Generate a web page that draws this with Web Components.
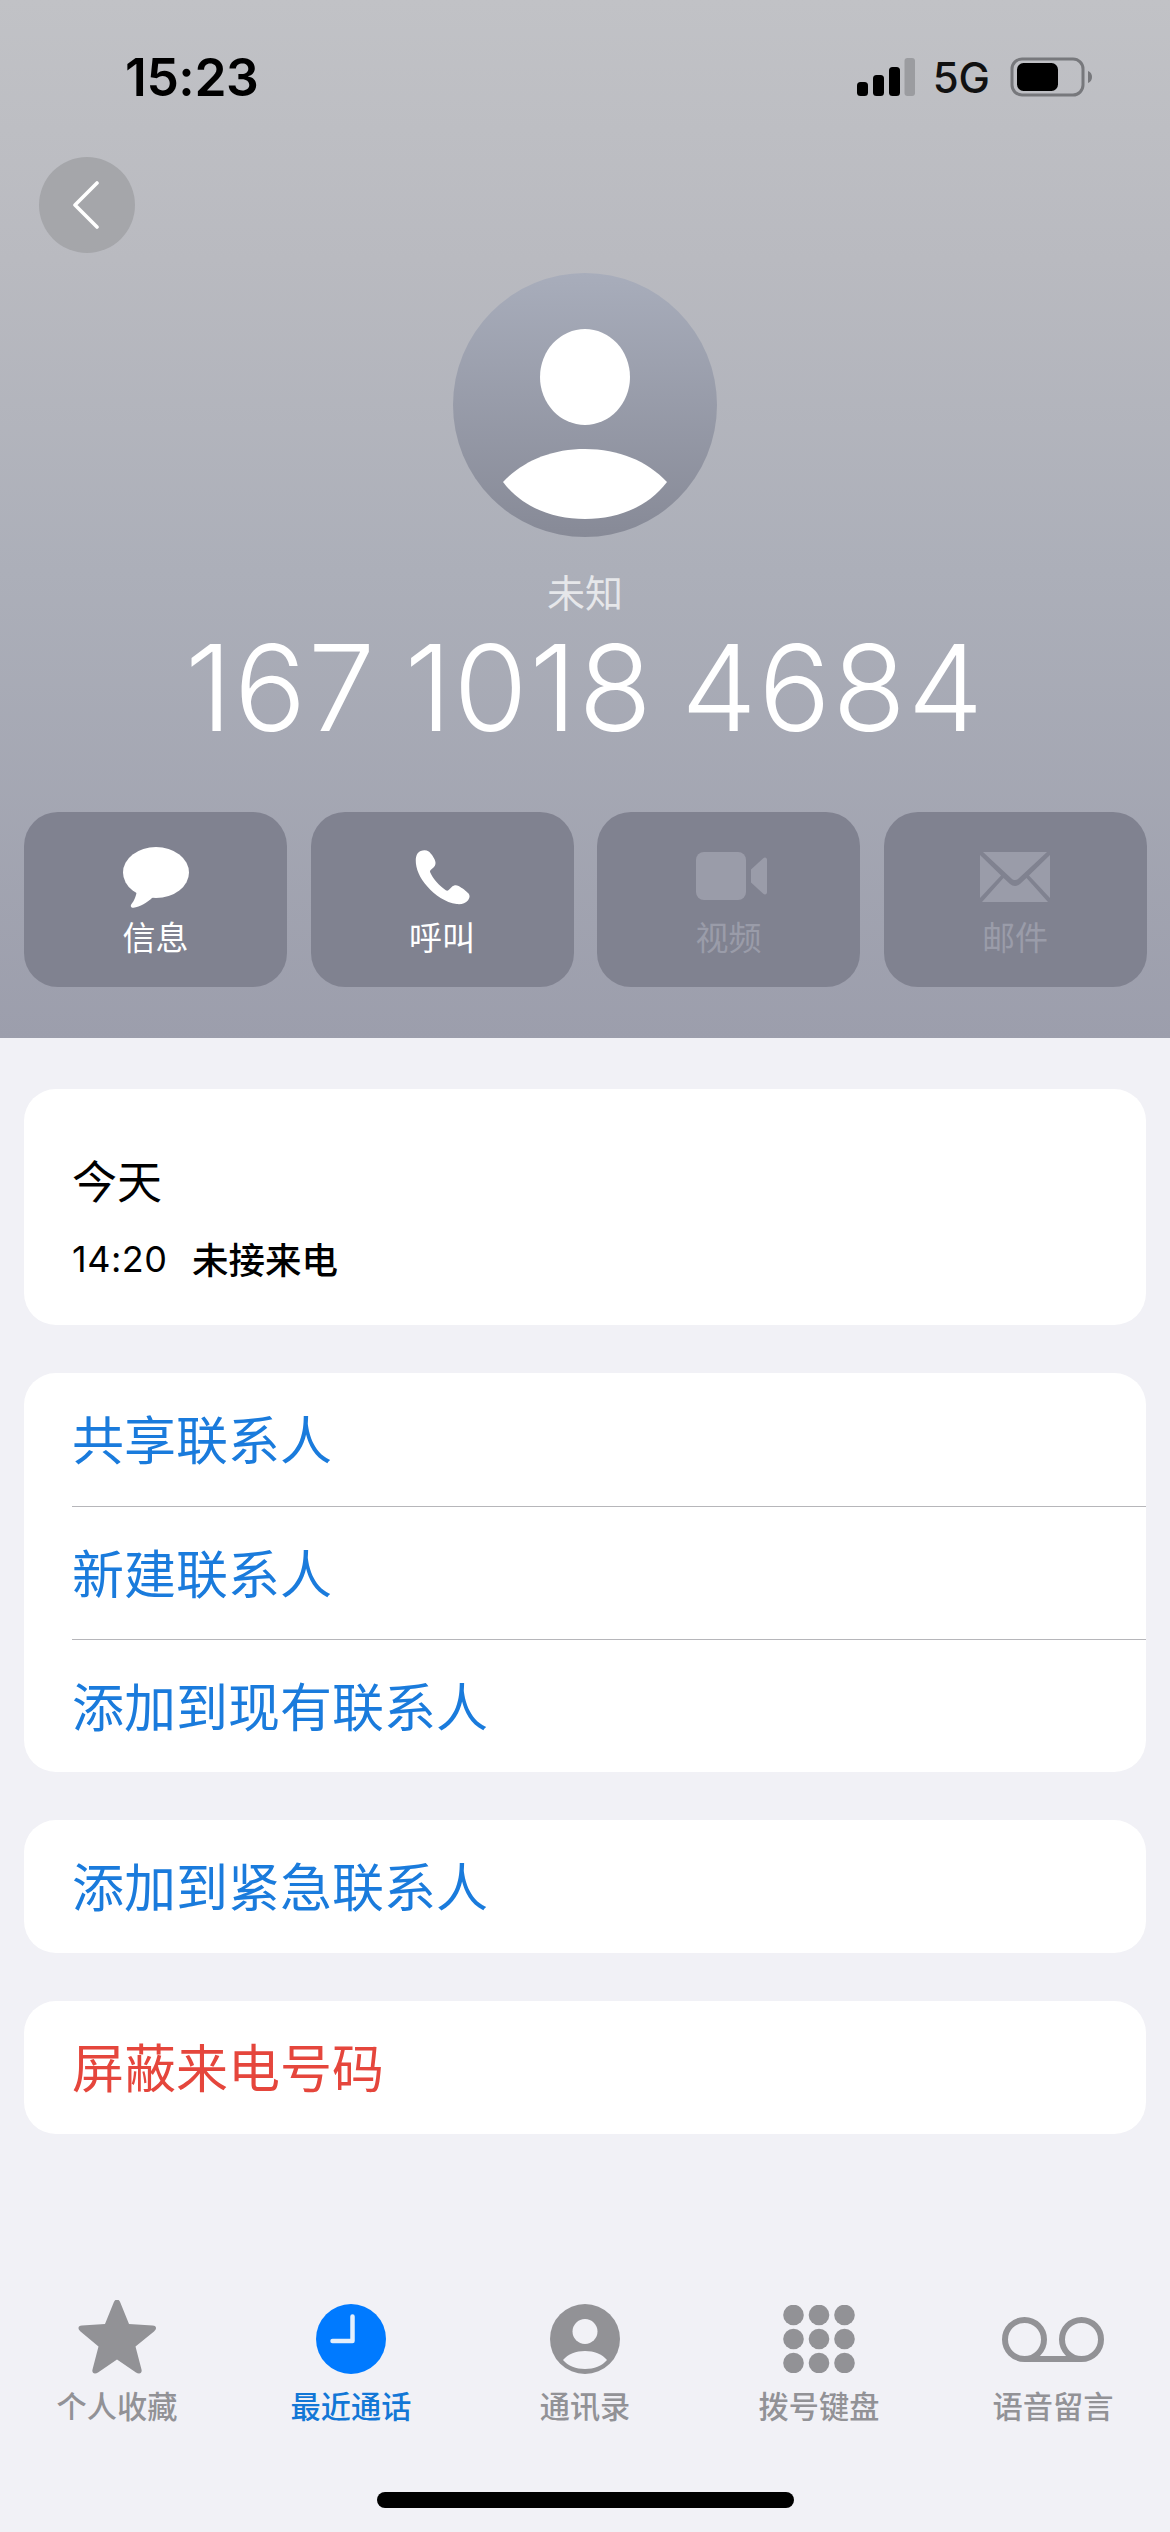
<!DOCTYPE html>
<html><head><meta charset="utf-8">
<style>
html,body{margin:0;padding:0;background:#f1f1f6}
body{width:1170px;height:2532px;overflow:hidden;position:relative;font-family:"Inter","Liberation Sans","Noto Sans CJK SC",sans-serif;display:flex;flex-direction:column}
</style></head><body>
<contact-header>
  <status-bar></status-bar>
  <back-button></back-button>
  <contact-avatar></contact-avatar>
  <span slot="name">未知</span>
  <span slot="number">167 1018 4684</span>
  <action-button slot="actions" label="信息" icon="msg"></action-button>
  <action-button slot="actions" label="呼叫" icon="phone"></action-button>
  <action-button slot="actions" label="视频" icon="video" disabled></action-button>
  <action-button slot="actions" label="邮件" icon="mail" disabled></action-button>
</contact-header>
<info-list>
  <history-card></history-card>
  <list-card><list-row>共享联系人</list-row><list-row>新建联系人</list-row><list-row>添加到现有联系人</list-row></list-card>
  <list-card><list-row>添加到紧急联系人</list-row></list-card>
  <list-card><list-row danger>屏蔽来电号码</list-row></list-card>
</info-list>
<tab-bar>
  <tab-item label="个人收藏" icon="star"></tab-item>
  <tab-item label="最近通话" icon="clock" active></tab-item>
  <tab-item label="通讯录" icon="person"></tab-item>
  <tab-item label="拨号键盘" icon="keypad"></tab-item>
  <tab-item label="语音留言" icon="voicemail"></tab-item>
</tab-bar>
<home-bar></home-bar>
<script>
const CJK='"Noto Sans CJK SC","Noto Sans",sans-serif';
function def(name,css,html){
  customElements.define(name,class extends HTMLElement{
    connectedCallback(){
      if(this.shadowRoot)return;
      const s=this.attachShadow({mode:'open'});
      s.innerHTML='<style>'+css+'</style>'+(typeof html==='function'?html(this):html);
    }
  });
}
const ICONS={
 msg:'<svg width="66" height="61" viewBox="0 0 66 61"><ellipse cx="33" cy="25.500" rx="33" ry="25.500" fill="currentColor"/><path d="M14 42C13.500 49 11 54 8.500 57c-1.500 2 -.5 4 2 3.800C17 60 24 56 30 50Z" fill="currentColor"/></svg>',
 phone:'<svg width="55" height="56" viewBox="0 0 58 58"><path d="M6 1.500C3 2.500 1 6 .8 11 .6 20 5 30 13 39c8 9 19 17 31 18.500 5 .5 9-.5 12-4 2-2.500 2-5 .5-7-2-2.500-7-6-10.500-8-2.500-1.300-5-1-7 .8l-3.500 3.500c-1 1-2 1-3 .3-3-2-7-5.500-10-9-3-3.500-5.500-7.500-6.500-10-.4-1 0-2 .8-2.700l3-2.800c2-2 2.300-4.300 1.300-7C20.500 9 17 4 14.500 2 12 .5 9 .5 6 1.500Z" fill="currentColor"/></svg>',
 video:'<svg style="margin:0 0 2px 6px" width="71" height="48" viewBox="0 0 71 48"><rect x="0" y="0" width="50" height="48" rx="8" fill="currentColor"/><path d="M55 17.500 67 6.500c2-1.700 4-.8 4 1.500v32c0 2.300-2 3.200-4 1.500L55 30.500Z" fill="currentColor"/></svg>',
 mail:'<svg width="70" height="50" viewBox="0 0 70 50"><g fill="currentColor"><path d="M3 0H67L38.500 26.500C36.500 28.500 33.500 28.500 31.500 26.500Z"/><path d="M0 3 21 23.500 0 46Z"/><path d="M70 3 49 23.500 70 46Z"/><path d="M23.500 26 30 32c3 2.500 7 2.500 10 0l6.500-6L68 50H2Z"/></g></svg>'
};
const TAB={
 star:'<svg width="78" height="78" viewBox="0 3 78 78"><path d="M39 2.500c1.500 0 2.500 1 3.300 3l8.700 21.500 23.500 1.500c2.500.2 3.500 1.200 3.500 2.500 0 1.200-.7 2.300-2 3.400L57.500 49.500l6 23c.6 2.300-.4 4-2.500 4-1 0-2-.4-3-1L39 62.500l-19 13c-1 .6-2 1-3 1-2.100 0-3.100-1.700-2.500-4l6-23L2.500 34.400C1.200 33.300.5 32.200.5 31c0-1.300 1-2.300 3.500-2.500L27 27l8.700-21.500c.8-2 1.800-3 3.300-3Z" fill="currentColor"/></svg>',
 clock:'<svg width="70" height="70" viewBox="0 0 70 70"><circle cx="35" cy="35" r="35" fill="#007aff"/><path d="M36.500 12.500V37H16.500" fill="none" stroke="#e3effc" stroke-width="4.500" stroke-linejoin="round" stroke-linecap="round"/></svg>',
 person:'<svg width="70" height="70" viewBox="0 0 70 70"><circle cx="35" cy="35" r="35" fill="currentColor"/><circle cx="35" cy="27.500" r="12.500" fill="#f1f1f6"/><path d="M13 56C18 50 26 47 35 47s17 3 22 9C52 62 44 65 35 65S18 62 13 56Z" fill="#f1f1f6"/></svg>',
 keypad:'<svg width="72" height="68" viewBox="0 0 72 68"><g fill="currentColor">'+[10,34,58].flatMap(y=>[10.500,36,61.500].map(x=>`<circle cx="${x}" cy="${y}" r="10.300"/>`)).join('')+'</g></svg>',
 voicemail:'<svg width="102" height="45" viewBox="0 0 102 45"><path d="M22 42H80" fill="none" stroke="currentColor" stroke-width="6"/><circle cx="22.500" cy="22.500" r="19.500" fill="none" stroke="currentColor" stroke-width="6"/><circle cx="79.500" cy="22.500" r="19.500" fill="none" stroke="currentColor" stroke-width="6"/></svg>'
};
def('status-bar',`:host{display:flex;flex:none;align-items:center;justify-content:space-between;height:44px;padding:55px 78px 0 125px;color:#000}
.t{font:600 51.500px/44px "Inter","Liberation Sans",sans-serif;letter-spacing:-.4px}
.r{display:flex;align-items:center;gap:18px}
.g{font:500 42px/44px "Inter","Liberation Sans",sans-serif;color:#111;margin:1px 2px 0 0}
svg{display:block}`,
`<span class="t">15:23</span><div class="r"><svg width="58" height="38" viewBox="0 0 58 38"><rect x="0" y="24" width="11" height="14" rx="3.500"/><rect x="16" y="17" width="11" height="21" rx="3.500"/><rect x="32" y="9" width="11" height="29" rx="3.500"/><rect x="47.500" y="0" width="10.500" height="38" rx="3" fill="#9b9ca0"/></svg><span class="g">5G</span><svg width="82" height="40" viewBox="0 0 82 40"><rect x="2" y="2" width="71" height="36" rx="10" fill="none" stroke="#77787c" stroke-width="3"/><rect x="7" y="6" width="41" height="28" rx="6.500" fill="#000"/><path d="M78 14c3 1 4 3.500 4 6s-1 5-4 6Z" fill="#77787c"/></svg></div>`);
def('back-button',`:host{display:flex;flex:none;align-items:center;justify-content:center;width:96px;height:96px;border-radius:50%;background:#a5a6aa;margin:58px 0 0 39px}svg{display:block;margin-right:2px}`,
`<svg width="28" height="48" viewBox="0 0 28 48"><path d="M25 2 3 24 25 46" fill="none" stroke="#fff" stroke-width="3.600" stroke-linecap="round" stroke-linejoin="round"/></svg>`);
def('contact-avatar',`:host{display:block;flex:none;width:264px;height:264px;border-radius:50%;background:linear-gradient(#a8adbb,#878a97);overflow:hidden;align-self:center;margin-top:20px}svg{display:block}`,
`<svg width="264" height="264" viewBox="0 0 264 264"><ellipse cx="132" cy="104" rx="45" ry="48" fill="#fff"/><path d="M50 209C70 188 98 176 132 176s62 12 82 33C195 234 165 246 132 246S69 234 50 209Z" fill="#fff"/></svg>`);
def('contact-header',`:host{display:flex;flex-direction:column;height:1038px;flex:none;box-sizing:border-box;background:linear-gradient(#c1c2c6 0,#b9bac0 25%,#acafb9 55%,#9c9eac 100%)}
.n{align-self:center;margin-top:29px;font:400 38px/50px ${CJK};color:#e6e7ea;flex:none}
.p{align-self:center;margin-top:11px;font:350 120px/122px "Inter","Liberation Sans",sans-serif;color:#fff;white-space:nowrap;flex:none;letter-spacing:1.800px;word-spacing:-8px}
.a{display:flex;flex:none;gap:23.500px;padding:0 24px;margin-top:63px}`,
`<slot></slot><div class="n"><slot name="name"></slot></div><div class="p"><slot name="number"></slot></div><div class="a"><slot name="actions"></slot></div>`);
def('action-button',`:host{display:flex;flex:none;flex-direction:column;align-items:center;width:263px;height:175px;border-radius:34px;background:#808290;color:#fff;font:400 33px/44px ${CJK}}
:host([disabled]){color:#9a9ca9}
.i{height:64px;margin-top:33px;display:flex;align-items:center;justify-content:center}.l{margin-top:5px}svg{display:block}`,
h=>`<div class="i">${ICONS[h.getAttribute('icon')]}</div><div class="l">${h.getAttribute('label')}</div>`);
def('info-list',`:host{display:flex;flex-direction:column;gap:48px;padding:51px 24px 0;flex:1}`,`<slot></slot>`);
def('history-card',`:host{display:block;background:#fff;border-radius:32px;height:236px;box-sizing:border-box;padding:61px 48px 0;color:#000}
.d{font:400 45px/60px ${CJK}}.r{display:flex;align-items:center;margin-top:25px;height:48px}.t{font:400 36px/48px "Inter","Liberation Sans",sans-serif;width:120px;letter-spacing:.5px}.m{font:500 36.500px/48px ${CJK}}`,
`<div class="d">今天</div><div class="r"><span class="t">14:20</span><span class="m">未接来电</span></div>`);
def('list-card',`:host{display:block;background:#fff;border-radius:32px;overflow:hidden}`,`<slot></slot>`);
def('list-row',`:host{display:block;height:133px;box-sizing:border-box;margin-left:48px;font:400 52px/129px ${CJK};color:#1a7bdc;border-top:1px solid #b6b6ba}
:host(:first-child){border-top:0}:host([danger]){color:#e5463c}`,`<slot></slot>`);
def('tab-bar',`:host{display:flex;flex:none;height:252px;box-sizing:border-box;padding-top:17px}`,`<slot></slot>`);
def('tab-item',`:host{flex:1;display:flex;flex-direction:column;align-items:center;color:#929296;font:500 30.200px/40px ${CJK}}
:host([active]){color:#1277d6}.i{height:84px;display:flex;align-items:center;justify-content:center}.l{margin-top:4px}svg{display:block}`,
h=>`<div class="i" style="color:#929296">${TAB[h.getAttribute('icon')]}</div><div class="l">${h.getAttribute('label')}</div>`);
def('home-bar',`:host{display:block;position:absolute;left:377px;top:2492px;width:417px;height:16px;border-radius:8px;background:#000}`,``);
</script>
</body></html>
